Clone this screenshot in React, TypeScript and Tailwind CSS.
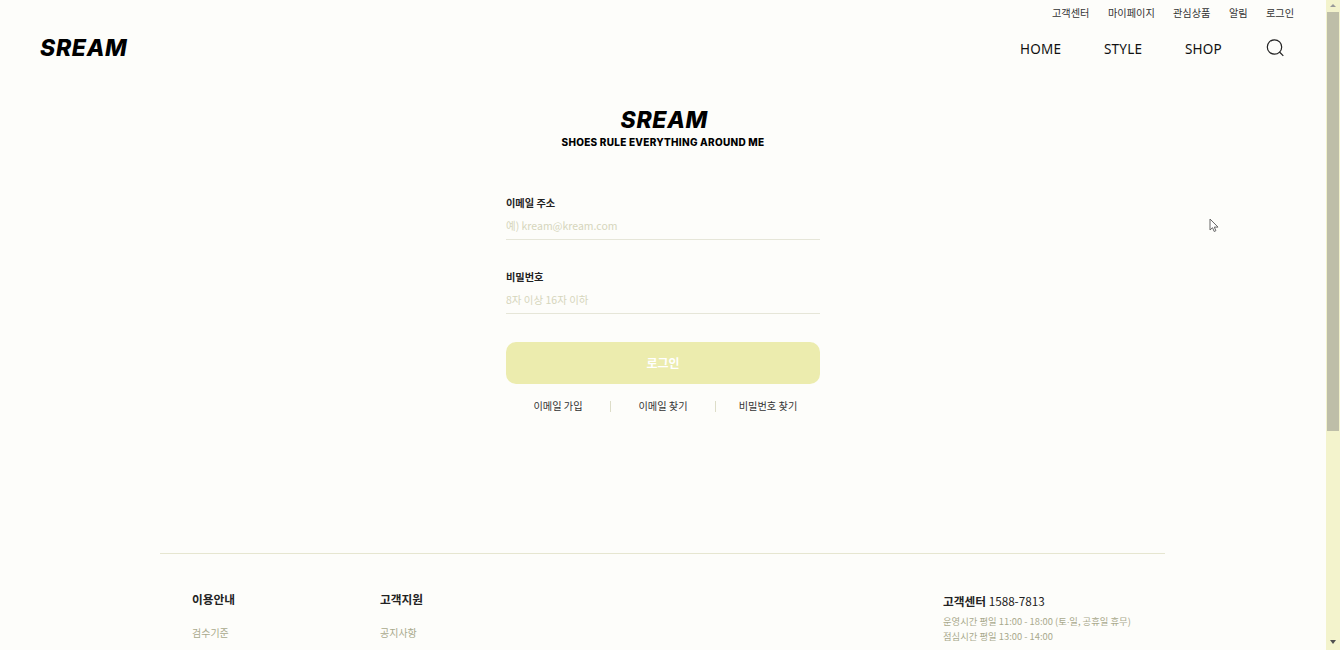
import clsx from "clsx";

const topLinks = [
    { label: "고객센터", width: "w-[38px]" },
    { label: "마이페이지", width: "w-[47px]" },
    { label: "관심상품", width: "w-[38px]" },
    { label: "알림", width: "w-[19px]" },
    { label: "로그인", width: "w-[28px]" },
];

const navLinks = [
    { label: "HOME", width: "w-[41px]" },
    { label: "STYLE", width: "w-[38px]" },
    { label: "SHOP", width: "w-[38px]" },
];

const fields = [
    { id: "email", label: "이메일 주소", type: "email", placeholder: "예) kream@kream.com" },
    { id: "password", label: "비밀번호", type: "password", placeholder: "8자 이상 16자 이하" },
];

const footerMenus = [
    { title: "이용안내", item: "검수기준" },
    { title: "고객지원", item: "공지사항" },
];

function Logo() {
    return (
        <span className="block w-[88px] whitespace-nowrap font-['Inter',sans-serif] text-[23px] font-extrabold italic leading-6 tracking-[0.7px] text-black">
            SREAM
        </span>
    );
}

function SearchIcon() {
    return (
        <svg width="18" height="18" viewBox="0 0 18 18" fill="none" stroke="#222" strokeWidth="1.2">
            <circle cx="8.5" cy="8" r="7.2" />
            <path d="M13.5 13l3.8 3.8" />
        </svg>
    );
}

function Header() {
    return (
        <header className="h-[72px]">
            <nav className="flex h-7 items-center justify-end gap-[18px] pb-[2px] pr-8 text-[10.2px] text-[#333]">
                {topLinks.map((l) => (
                    <a key={l.label} href="#" className={clsx("whitespace-nowrap", l.width)}>{l.label}</a>
                ))}
            </nav>
            <div className="flex h-10 items-center justify-between pl-10 pr-[42px]">
                <div className="pb-px"><Logo /></div>
                <nav className="flex items-center gap-[43px] font-['Noto_Sans','Noto_Sans_CJK_KR',sans-serif] text-[13.5px] tracking-[0.2px] text-[#111]">
                    {navLinks.map((l) => (
                        <a key={l.label} href="#" className={clsx("whitespace-nowrap pt-[3px]", l.width)}>{l.label}</a>
                    ))}
                    <a href="#" aria-label="검색"><SearchIcon /></a>
                </nav>
            </div>
        </header>
    );
}

function LoginForm() {
    return (
        <main className="mx-auto flex h-[481px] w-[314px] flex-col pt-9">
            <div className="flex flex-col items-center">
                <div className="pl-[3px]"><Logo /></div>
                <p className="mt-[2px] whitespace-nowrap font-['Inter',sans-serif] text-[10px] font-extrabold leading-4 tracking-[0.26px] text-black">SHOES RULE EVERYTHING AROUND ME</p>
            </div>
            <form className="mt-[45px]">
                {fields.map((f) => (
                    <div key={f.id} className="mb-[26px] h-12">
                        <label htmlFor={f.id} className="block text-[10.2px] font-bold leading-4 text-[#222]">{f.label}</label>
                        <input
                            id={f.id}
                            type={f.type}
                            placeholder={f.placeholder}
                            className="block h-[29px] w-full border-b border-[#e6e6d8] bg-transparent text-[10.5px] outline-none placeholder:text-[#d6d6bc]"
                        />
                    </div>
                ))}
                <button type="button" className="mt-[-1px] block h-[42px] w-full rounded-[10px] bg-[#ececae] text-[12px] font-bold text-white">로그인</button>
            </form>
            <div className="mt-[14px] flex h-4 items-center text-[10.2px] text-[#333]">
                <a href="#" className="flex-1 text-center">이메일 가입</a>
                <span className="h-[11px] w-px bg-[#ddddc8]" />
                <a href="#" className="flex-1 text-center">이메일 찾기</a>
                <span className="h-[11px] w-px bg-[#ddddc8]" />
                <a href="#" className="flex-1 text-center">비밀번호 찾기</a>
            </div>
        </main>
    );
}

function Footer() {
    return (
        <footer className="ml-[160px] flex w-[1005px] justify-between border-t border-[#e6e6d0] pl-8 pr-[34px] pt-[35px]">
            <div className="flex">
                {footerMenus.map((m) => (
                    <div key={m.title} className="w-[188px]">
                        <h2 className="text-[11.7px] font-bold leading-5 text-[#222]">{m.title}</h2>
                        <a href="#" className="mt-4 block text-[10px] leading-4 text-[#a9a98c]">{m.item}</a>
                    </div>
                ))}
            </div>
            <div className="w-[188px] whitespace-nowrap text-[9.35px] leading-[15px] text-[#a9a98c]">
                <h2 className="mb-[3px] pt-[2px] text-[11.7px] font-bold leading-5 text-[#222]">고객센터 <span className="font-normal">1588-7813</span></h2>
                <p>운영시간 평일 11:00 - 18:00 (토∙일, 공휴일 휴무)</p>
                <p>점심시간 평일 13:00 - 14:00</p>
            </div>
        </footer>
    );
}

function Scrollbar() {
    return (
        <div className="flex w-[14px] flex-col items-center bg-[#f3f3cc]">
            <svg width="14" height="12" viewBox="0 0 14 12"><path d="M4 7l3-3 3 3z" fill="#999" /></svg>
            <div className="h-[419px] w-3 bg-[#bebea8]" />
            <svg className="mt-auto" width="14" height="14" viewBox="0 0 14 14"><path d="M4 4h6L7 8z" fill="#505050" /></svg>
        </div>
    );
}

export default function App() {
    return (
        <div className="relative flex h-[650px] w-[1340px] overflow-hidden bg-[#fdfdfa] font-['Noto_Sans_CJK_KR',sans-serif]">
            <div className="h-full flex-1 overflow-hidden">
                <Header />
                <LoginForm />
                <Footer />
            </div>
            <Scrollbar />
            <svg className="absolute left-[1209px] top-[218px]" width="10" height="15" viewBox="0 0 10 15">
                <path d="M1 1v11l2.5-2.3L5.2 13.5l1.7-.8-1.6-3.6H9z" fill="#fff" stroke="#666" strokeWidth="1" />
            </svg>
        </div>
    );
}
